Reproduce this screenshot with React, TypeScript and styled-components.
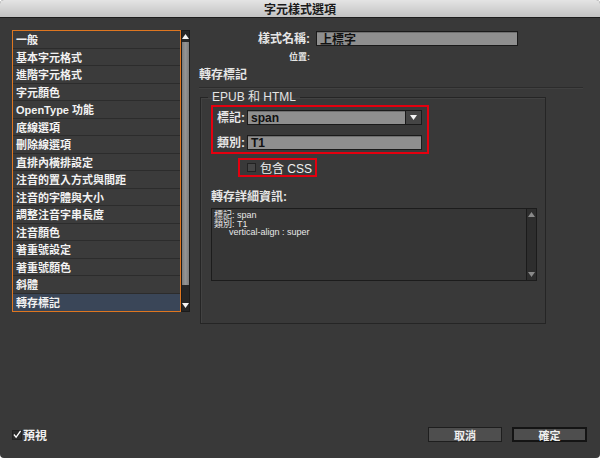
import React from 'react'
import styled, { createGlobalStyle } from 'styled-components'

const GlobalStyle = createGlobalStyle`
  html, body {
    margin: 0;
    padding: 0;
    background: #ffffff;
  }
  body {
    font-family: "Liberation Sans", "Noto Sans CJK TC", sans-serif;
  }
`

const Window = styled.div`
  width: 600px;
  height: 458px;
  display: flex;
  flex-direction: column;
  background: #393939;
  border-radius: 4px;
  overflow: hidden;
  color: #eeeeee;
  font-size: 11px;
`

const TitleBar = styled.div`
  flex: 0 0 18px;
  box-sizing: border-box;
  display: flex;
  align-items: center;
  justify-content: center;
  background: linear-gradient(#e4e4e4, #c2c2c2);
  border-bottom: 1px solid #1c1c1c;
  font-size: 12px;
  font-weight: 700;
  color: #1a1a1a;
`

const Main = styled.div`
  display: flex;
  gap: 9px;
  padding: 12px 12px 0 12px;
`

/* ---- left list ---- */

const ListWrap = styled.div`
  display: flex;
  width: 178px;
  height: 282px;
`

const List = styled.div`
  flex: 1;
  display: flex;
  flex-direction: column;
  border: 1px solid #de7620;
  background: #3b3b3b;
`

const Row = styled.div<{ $selected?: boolean }>`
  height: 17.5px;
  box-sizing: border-box;
  display: flex;
  align-items: center;
  padding-left: 3px;
  border-bottom: 1px solid #2c2c2c;
  background: ${({ $selected }) => ($selected ? '#3a4658' : 'transparent')};
  font-size: 11px;
  font-weight: 700;
  color: #f2f2f2;
  white-space: nowrap;
  &:last-child {
    border-bottom: none;
  }
`

const ScrollBar = styled.div<{ $inset?: boolean }>`
  width: ${({ $inset }) => ($inset ? '10px' : '9px')};
  box-sizing: border-box;
  display: flex;
  flex-direction: column;
  background: ${({ $inset }) => ($inset ? '#2e2e2e' : '#262626')};
  border: 1px solid #1b1b1b;
  ${({ $inset }) => ($inset ? 'border-width: 0 0 0 1px;' : '')}
`

const ArrowBtn = styled.div`
  flex: 0 0 11px;
  display: flex;
  align-items: center;
  justify-content: center;
`

const Thumb = styled.div`
  flex: 0 0 243px;
  background: linear-gradient(90deg, #7c7c7c, #949494, #7c7c7c);
`

const Track = styled.div`
  flex: 1;
`

const Arrow = ({ up, color = '#f4f4f4' }: { up?: boolean; color?: string }) => (
  <svg width="7" height="5" viewBox="0 0 7 5">
    <path d={up ? 'M0 5 L3.5 0 L7 5 Z' : 'M0 0 L7 0 L3.5 5 Z'} fill={color} />
  </svg>
)

/* ---- right panel ---- */

const Right = styled.div`
  flex: 1;
  display: flex;
  flex-direction: column;
`

const FormRow = styled.div<{ $height: number; $top: number }>`
  display: flex;
  align-items: center;
  gap: 6px;
  height: ${({ $height }) => $height}px;
  margin-top: ${({ $top }) => $top}px;
`

const RowLabel = styled.div<{ $small?: boolean }>`
  width: 111px;
  text-align: right;
  line-height: 1;
  font-size: ${({ $small }) => ($small ? '9px' : '12px')};
  font-weight: 700;
  color: #e6e6e6;
`

const TextInput = styled.div<{ $width: number }>`
  width: ${({ $width }) => $width}px;
  height: 15px;
  box-sizing: border-box;
  display: flex;
  align-items: center;
  padding-left: 3px;
  background: #8f8f8f;
  border: 1px solid #1a1a1a;
  box-shadow: inset 0 1px 0 #6f6f6f;
  font-size: 12px;
  font-weight: 700;
  color: #111111;
`

const SectionTitle = styled.div`
  margin-top: 6px;
  height: 14px;
  line-height: 14px;
  font-size: 12px;
  font-weight: 700;
  color: #e6e6e6;
`

const Separator = styled.div`
  width: 384px;
  margin-top: 5px;
  border-top: 1px solid #2c2c2c;
  border-bottom: 1px solid #414141;
`

const Group = styled.fieldset`
  margin: 1px 0 0 1px;
  width: 346px;
  height: 234px;
  box-sizing: border-box;
  padding: 0 10px;
  min-width: 0;
  border: 1px solid #252525;
  box-shadow: inset 1px 1px 0 #424242;
`

const Legend = styled.legend`
  margin-left: -3px;
  padding: 0 4px;
  height: 14px;
  line-height: 14px;
  font-size: 12px;
  color: #e4e4e4;
`

const RedBox = styled.div<{ $width: number }>`
  width: ${({ $width }) => $width}px;
  box-sizing: border-box;
  border: 2px solid #e4000f;
`

const TagBox = styled(RedBox)`
  margin-top: 1px;
  display: flex;
  flex-direction: column;
  gap: 10px;
  padding: 3px 5px 2px 4px;
`

const FieldLabel = styled.div`
  width: 30px;
  line-height: 1;
  font-size: 12px;
  font-weight: 700;
  color: #e6e6e6;
`

const FieldRow = styled.div`
  display: flex;
  align-items: center;
  height: 15px;
`

const Select = styled.div`
  width: 175px;
  height: 15px;
  box-sizing: border-box;
  display: flex;
  border: 1px solid #1a1a1a;
  background: #8f8f8f;
  font-size: 12px;
  font-weight: 700;
  color: #111111;
`

const SelectValue = styled.div`
  flex: 1;
  display: flex;
  align-items: center;
  padding-left: 3px;
  box-shadow: inset 0 1px 0 #6f6f6f;
`

const SelectButton = styled.div`
  width: 15px;
  display: flex;
  align-items: center;
  justify-content: center;
  background: #454545;
  border-left: 1px solid #1a1a1a;
`

const CssBox = styled(RedBox)`
  margin: 4px 0 0 27px;
  height: 19px;
  display: flex;
  align-items: center;
  gap: 4px;
  padding-left: 7px;
  font-size: 12px;
  color: #f0f0f0;
`

const CheckSquare = styled.div<{ $size: number; $dark?: boolean }>`
  width: ${({ $size }) => $size}px;
  height: ${({ $size }) => $size}px;
  box-sizing: border-box;
  display: flex;
  align-items: center;
  justify-content: center;
  background: ${({ $dark }) => ($dark ? '#2c2c2c' : '#464646')};
  border: 1px solid #222222;
`

const DetailsLabel = styled.div`
  margin-top: 13px;
  height: 14px;
  line-height: 14px;
  font-size: 12px;
  font-weight: 700;
  color: #e6e6e6;
`

const Details = styled.div`
  margin-top: 4px;
  width: 326px;
  height: 73px;
  box-sizing: border-box;
  display: flex;
  background: #363636;
  border: 1px solid #1c1c1c;
`

const DetailsText = styled.div`
  flex: 1;
  padding: 2px 2px;
  font-size: 9px;
  line-height: 8.6px;
  color: #e8e8e8;
  white-space: pre;
`

const DetailLine = styled.div`
  height: 8.6px;
`

/* ---- footer ---- */

const Footer = styled.div`
  margin-top: auto;
  display: flex;
  align-items: center;
  padding: 0 13px 16px 12px;
  height: 15px;
`

const Preview = styled.div`
  display: flex;
  align-items: center;
  gap: 1px;
  font-size: 12px;
  font-weight: 700;
  color: #f0f0f0;
`

const Spacer = styled.div`
  flex: 1;
`

const Button = styled.div<{ $primary?: boolean }>`
  width: ${({ $primary }) => ($primary ? '75px' : '74px')};
  height: 15px;
  box-sizing: border-box;
  display: flex;
  align-items: center;
  justify-content: center;
  margin-left: ${({ $primary }) => ($primary ? '10px' : '0')};
  background: #4e4e4e;
  border: ${({ $primary }) => ($primary ? '2px solid #141414' : '1px solid #1e1e1e')};
  font-size: 11px;
  font-weight: 700;
  color: #f0f0f0;
`

const items = [
  '一般',
  '基本字元格式',
  '進階字元格式',
  '字元顏色',
  'OpenType 功能',
  '底線選項',
  '刪除線選項',
  '直排內橫排設定',
  '注音的置入方式與間距',
  '注音的字體與大小',
  '調整注音字串長度',
  '注音顏色',
  '著重號設定',
  '著重號顏色',
  '斜體',
  '轉存標記',
]

const details = ['標記: span', '類別: T1', '      vertical-align : super']

export default function App() {
  return (
    <>
      <GlobalStyle />
      <Window>
        <TitleBar>字元樣式選項</TitleBar>

        <Main>
          <ListWrap>
            <List>
              {items.map((item, i) => (
                <Row key={item} $selected={i === items.length - 1}>
                  {item}
                </Row>
              ))}
            </List>
            <ScrollBar>
              <ArrowBtn>
                <Arrow up />
              </ArrowBtn>
              <Thumb />
              <Track />
              <ArrowBtn>
                <Arrow />
              </ArrowBtn>
            </ScrollBar>
          </ListWrap>

          <Right>
            <FormRow $height={15} $top={1}>
              <RowLabel>樣式名稱:</RowLabel>
              <TextInput $width={202}>上標字</TextInput>
            </FormRow>
            <FormRow $height={10} $top={6}>
              <RowLabel $small>位置:</RowLabel>
            </FormRow>

            <SectionTitle>轉存標記</SectionTitle>
            <Separator />

            <Group>
              <Legend>EPUB 和 HTML</Legend>

              <TagBox $width={218}>
                <FieldRow>
                  <FieldLabel>標記:</FieldLabel>
                  <Select>
                    <SelectValue>span</SelectValue>
                    <SelectButton>
                      <Arrow />
                    </SelectButton>
                  </Select>
                </FieldRow>
                <FieldRow>
                  <FieldLabel>類別:</FieldLabel>
                  <TextInput $width={175}>T1</TextInput>
                </FieldRow>
              </TagBox>

              <CssBox $width={79}>
                <CheckSquare $size={9} />
                包含 CSS
              </CssBox>

              <DetailsLabel>轉存詳細資訊:</DetailsLabel>
              <Details>
                <DetailsText>
                  {details.map((line) => (
                    <DetailLine key={line}>{line}</DetailLine>
                  ))}
                </DetailsText>
                <ScrollBar $inset>
                  <ArrowBtn>
                    <Arrow up color="#8a8a8a" />
                  </ArrowBtn>
                  <Track />
                  <ArrowBtn>
                    <Arrow color="#8a8a8a" />
                  </ArrowBtn>
                </ScrollBar>
              </Details>
            </Group>
          </Right>
        </Main>

        <Footer>
          <Preview>
            <CheckSquare $size={10} $dark>
              <svg width="9" height="9" viewBox="0 0 9 9">
                <path d="M1 4.5 L3.5 7.5 L8.5 0.5" stroke="#ffffff" strokeWidth="1.4" fill="none" />
              </svg>
            </CheckSquare>
            預視
          </Preview>
          <Spacer />
          <Button>取消</Button>
          <Button $primary>確定</Button>
        </Footer>
      </Window>
    </>
  )
}
